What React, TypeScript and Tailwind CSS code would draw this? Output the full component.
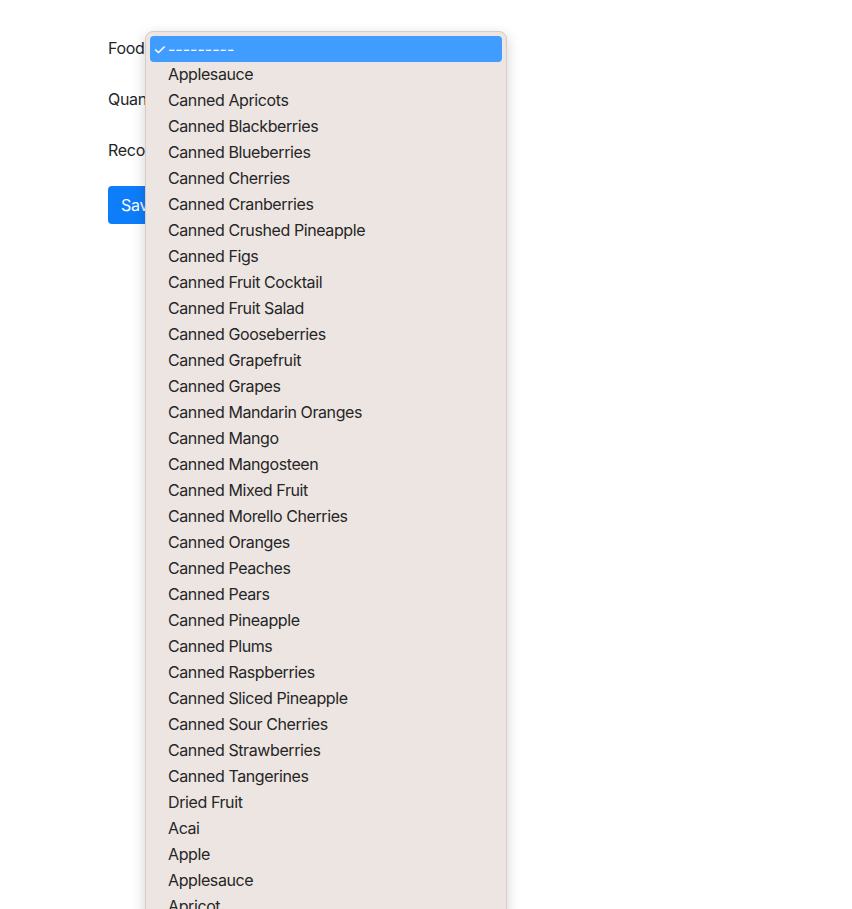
import React from "react";

const items = [
  "Applesauce",
  "Canned Apricots",
  "Canned Blackberries",
  "Canned Blueberries",
  "Canned Cherries",
  "Canned Cranberries",
  "Canned Crushed Pineapple",
  "Canned Figs",
  "Canned Fruit Cocktail",
  "Canned Fruit Salad",
  "Canned Gooseberries",
  "Canned Grapefruit",
  "Canned Grapes",
  "Canned Mandarin Oranges",
  "Canned Mango",
  "Canned Mangosteen",
  "Canned Mixed Fruit",
  "Canned Morello Cherries",
  "Canned Oranges",
  "Canned Peaches",
  "Canned Pears",
  "Canned Pineapple",
  "Canned Plums",
  "Canned Raspberries",
  "Canned Sliced Pineapple",
  "Canned Sour Cherries",
  "Canned Strawberries",
  "Canned Tangerines",
  "Dried Fruit",
  "Acai",
  "Apple",
  "Applesauce",
  "Apricot",
  "Avocado",
];

export default function App() {
  return (
    <div
      className="relative h-[909px] w-[852px] overflow-hidden bg-white text-[16px] text-[#212529]"
      style={{ fontFamily: "Inter, 'Liberation Sans', sans-serif" }}
    >
      <div className="flex flex-col pl-[108px] pt-[36px] tracking-[-0.3px]">
        <div className="h-[51px] leading-[24px]">Food</div>
        <div className="h-[51px] leading-[24px]">Quantity</div>
        <div className="h-[48px] leading-[24px]">Recorded</div>
        <div>
          <button className="h-[38px] rounded-[4px] bg-[#0d7dfa] px-[13px] text-[16px] text-white">
            Save
          </button>
        </div>
      </div>

      <div className="absolute left-[145px] top-[31px] h-[900px] w-[362px] rounded-[8px] border border-[#d3cccb] bg-[#ece5e2] px-[4px] pt-[4px] shadow-[0_4px_14px_rgba(0,0,0,0.18)] tracking-[-0.4px]">
        <div className="flex h-[26px] items-center rounded-[4px] bg-[#419cff] text-white">
          <span className="w-[18px] pl-[3px] text-[15px] leading-none">✓</span>
          <span className="leading-[26px] tracking-[0px]">---------</span>
        </div>
        {items.map((it, i) => (
          <div key={i} className="h-[26px] pl-[18px] leading-[25px] text-[#262626]">
            {it}
          </div>
        ))}
      </div>
    </div>
  );
}
